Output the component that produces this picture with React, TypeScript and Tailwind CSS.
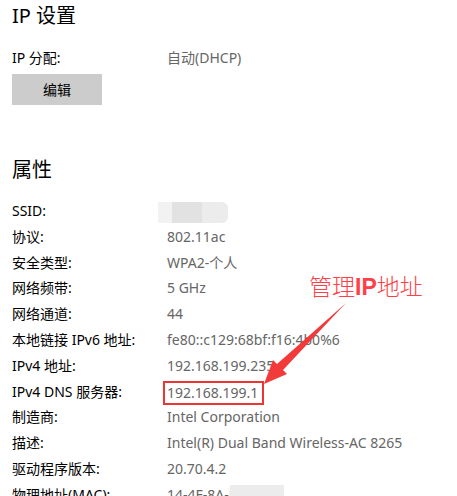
const rows: [string, string][] = [
  ["SSID:", ""],
  ["协议:", "802.11ac"],
  ["安全类型:", "WPA2-个人"],
  ["网络频带:", "5 GHz"],
  ["网络通道:", "44"],
  ["本地链接 IPv6 地址:", "fe80::c129:68bf:f16:4b0%6"],
  ["IPv4 地址:", "192.168.199.235"],
  ["IPv4 DNS 服务器:", "192.168.199.1"],
  ["制造商:", "Intel Corporation"],
  ["描述:", "Intel(R) Dual Band Wireless-AC 8265"],
  ["驱动程序版本:", "20.70.4.2"],
  ["物理地址(MAC):", "14-4F-8A-F"],
];

function Value({ label, value }: { label: string; value: string }) {
  if (label === "SSID:") {
    return (
      <span className="inline-flex h-[21px] w-[70px] -ml-[9px] align-middle rounded-r-[6px] overflow-hidden">
        <span className="w-[14px] bg-[#f2f2f2]" />
        <span className="w-[30px] bg-[#e2e2e2]" />
        <span className="w-[26px] bg-[#ececec]" />
      </span>
    );
  }
  if (label === "IPv4 DNS 服务器:") {
    return (
      <span className="inline-block -ml-[4px] w-[101px] h-[24px] border-2 border-[#ef3434] pl-[2px] leading-[20px] align-middle">
        {value}
      </span>
    );
  }
  if (label === "物理地址(MAC):") {
    return (
      <span className="inline-flex items-center">
        <span>14-4F-8A-F</span>
        <span className="ml-[-6px] inline-block h-[20px] w-[54px] bg-[#ececec]" />
      </span>
    );
  }
  return <span>{value}</span>;
}

export default function App() {
  return (
    <div
      className="relative w-[457px] h-[496px] overflow-hidden bg-white pl-[12px] text-[14px] text-black"
      style={{ fontFamily: '"Noto Sans", "Noto Sans CJK SC", sans-serif' }}
    >
      <h1 className="pt-[2px] text-[20px] leading-[28px] font-normal">IP 设置</h1>

      <div className="mt-[15px] flex leading-[26px]">
        <span className="w-[155px]">IP 分配:</span>
        <span className="text-[#666]">自动(DHCP)</span>
      </div>

      <button className="mt-[3px] flex h-[31px] w-[90px] items-center justify-center bg-[#cccccc] text-[14px]">
        编辑
      </button>

      <h2 className="mt-[51px] text-[20px] leading-[28px] font-normal">属性</h2>

      <div className="mt-[14px]">
        {rows.map(([label, value]) => (
          <div key={label} className="flex h-[25.8px] items-center leading-[25.8px]">
            <span className="w-[155px] shrink-0">{label}</span>
            <span className="whitespace-nowrap text-[#666]">
              <Value label={label} value={value} />
            </span>
          </div>
        ))}
      </div>

      <div
        className="absolute left-[309px] top-[270px] text-[23px] leading-[30px] text-[#ff4048]"
        style={{ fontFamily: '"Noto Sans CJK SC", sans-serif', fontWeight: 300 }}
      >
        管理<span className="font-semibold" style={{ fontFamily: '"Liberation Sans", sans-serif' }}>IP</span>地址
      </div>

      <svg className="pointer-events-none absolute left-0 top-0" width="457" height="496" viewBox="0 0 457 496">
        <polygon
          points="346,303 283,370 287,374 264,384 273,360 277,364"
          fill="#f23a3a"
        />
      </svg>
    </div>
  );
}
